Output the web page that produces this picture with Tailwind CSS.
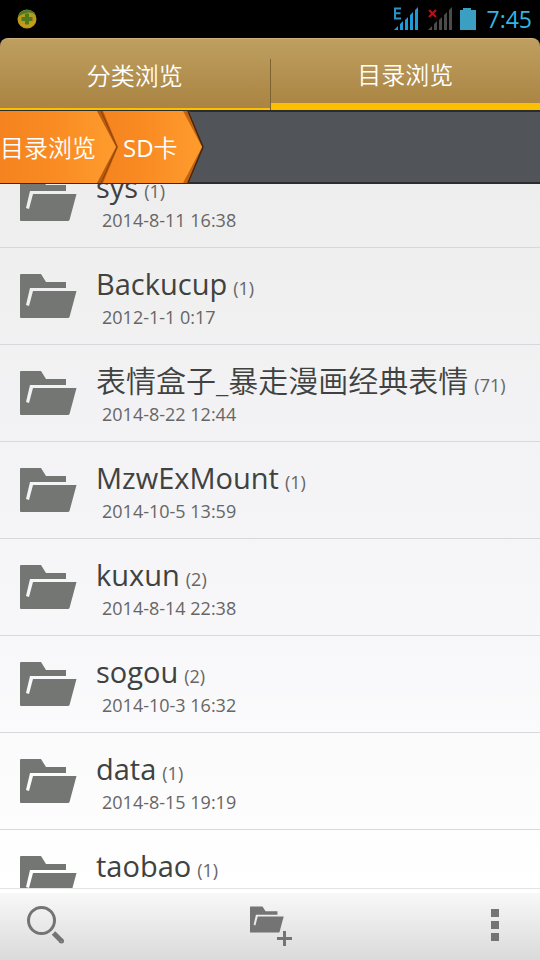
<!DOCTYPE html>
<html lang="zh-CN">
<head>
<meta charset="utf-8">
<meta name="viewport" content="width=device-width, initial-scale=1">
<title>目录浏览</title>
<script src="https://cdn.jsdelivr.net/npm/@tailwindcss/browser@4"></script>
</head>
<body class="bg-black">
<svg class="absolute size-0" aria-hidden="true">
  <symbol id="folder" viewBox="0 0 57 44">
    <path d="M1 0H21L26 8H46V14H10L6 31L9 32L13 17H56.500L49.500 43Q49 44 48 44H1Q0 44 0 43V1Q0 0 1 0Z" fill="currentColor"/>
  </symbol>
  <linearGradient id="orange"><stop offset="0" stop-color="#f5831f"/><stop offset=".45" stop-color="#f98b22"/><stop offset="1" stop-color="#ff9c2e"/></linearGradient>
</svg>
<div class="flex h-screen flex-col overflow-hidden font-['Open_Sans','Noto_Sans_CJK_SC',sans-serif]">
  <header class="flex h-[38px] shrink-0 items-center justify-between bg-black pr-2 pl-[17px]">
    <svg class="size-5" viewBox="0 0 20 20" aria-hidden="true">
      <circle cx="10" cy="10" r="9.500" fill="#b99a1c"/>
      <path d="M1 8A9.500 9.500 0 0 1 18.500 6C14 2 8 3 1 8Z" fill="#477b2c"/>
      <path d="M3 15Q10 20 17 15Q19 12 19 9Q16 16 3 15Z" fill="#d09a17"/>
      <path d="M8 4.500h4V8h3.500v4H12v3.500H8V12H4.500V8H8Z" fill="#4e7a19"/>
    </svg>
    <div class="flex items-center">
      <svg class="h-6 w-[84px]" viewBox="0 0 84 24" aria-hidden="true">
        <g fill="#1c9bd8"><path d="M1 23L5 19V23Z"/><path d="M7 17l3-3v9h-3ZM12 13l3-3v13h-3ZM17 8l3-3v18h-3ZM22 3l3-3v23h-3Z"/></g>
        <path d="M8 1.500H2V11.500H8M2 6.300H7.500" fill="none" stroke="#2b93c4" stroke-width="2"/>
        <g fill="#4b4b4b"><path d="M35 23L39 19V23Z"/><path d="M41 17l3-3v9h-3ZM46 13l3-3v13h-3ZM51 8l3-3v18h-3ZM56 3l3-3v23h-3Z"/></g>
        <path d="M36 3L43 10M43 3L36 10" stroke="#b5121b" stroke-width="2"/>
        <path d="M70 1h8v2h5v20H67V3h3Z" fill="#3a9fc0"/>
      </svg>
      <time class="ml-2.5 text-[23px] leading-9 text-[#33b5e5]">7:45</time>
    </div>
  </header>

  <nav class="flex h-[72px] shrink-0 overflow-hidden rounded-t-lg border-t border-[#cdb07a] bg-linear-to-b from-[#be9f60] to-[#a98341] text-2xl font-[350] text-white" aria-label="浏览方式">
    <a href="#category" class="flex flex-1 items-center justify-center border-b-2 border-[#fcc000] pt-1">分类浏览</a>
    <span class="mt-5 w-px bg-[#7d6232]"></span>
    <a href="#directory" aria-current="page" class="flex flex-1 items-center justify-center border-b-[7px] border-[#fcc000] pt-2">目录浏览</a>
  </nav>

  <nav class="relative z-10 flex h-[74px] shrink-0 border-y-2 border-[#2b2c2e] bg-[#515459] text-2xl font-[350] text-white" aria-label="路径">
    <a href="#root" class="relative z-10 -my-px flex w-[118px] shrink-0 items-center pt-0.5">
      <svg class="absolute inset-0 size-full" viewBox="0 0 118 72" preserveAspectRatio="none" aria-hidden="true">
        <path d="M96 0H103L118 36L103 72H96Z" fill="#b95a0c"/>
        <path d="M101 0L117 36L101 72" fill="none" stroke="#8a4309"/>
        <path d="M0 0H97L116 36L97 72H0Z" fill="url(#orange)"/>
      </svg>
      <span class="relative">目录浏览</span>
    </a>
    <a href="#sd" class="relative -my-px -ml-[22px] flex w-[108px] shrink-0 items-center pt-0.5 pl-[27px]">
      <svg class="absolute inset-0 size-full" viewBox="0 0 108 72" preserveAspectRatio="none" aria-hidden="true">
        <path d="M85 0H93L107.500 36L93 72H85Z" fill="#c5620f"/>
        <path d="M92 0L107 36L92 72" fill="none" stroke="#3a2616" stroke-width="1.500"/>
        <path d="M0 0H87L106 36L87 72H0Z" fill="url(#orange)"/>
      </svg>
      <span class="relative font-normal">SD<span class="font-[350]">卡</span></span>
    </a>
  </nav>

  <main class="min-h-0 flex-1 overflow-hidden bg-linear-to-b from-[#eeeeee] via-[#f5f4f7] to-white">
    <ul class="-mt-[33px] text-[#404240]">
      <li class="border-b border-[#d8d8da]"><a href="#sys" class="flex h-24 pl-5"><svg class="mt-[26px] h-11 w-[57px] shrink-0 text-[#747674]" aria-hidden="true"><use href="#folder"/></svg><span class="ml-[19px] flex flex-col pt-[18px]"><span class="flex items-baseline gap-1.5 text-[29px] leading-9">sys<span class="text-lg leading-6 text-[#666]">(1)</span></span><time class="mt-[3px] pl-1.5 text-lg leading-6 text-[#666]">2014-8-11 16:38</time></span></a></li>
      <li class="border-b border-[#d8d8da]"><a href="#backucup" class="flex h-24 pl-5"><svg class="mt-[26px] h-11 w-[57px] shrink-0 text-[#747674]" aria-hidden="true"><use href="#folder"/></svg><span class="ml-[19px] flex flex-col pt-[18px]"><span class="flex items-baseline gap-1.5 text-[29px] leading-9">Backucup<span class="text-lg leading-6 text-[#666]">(1)</span></span><time class="mt-[3px] pl-1.5 text-lg leading-6 text-[#666]">2012-1-1 0:17</time></span></a></li>
      <li class="border-b border-[#d8d8da]"><a href="#biaoqing" class="flex h-24 pl-5"><svg class="mt-[26px] h-11 w-[57px] shrink-0 text-[#747674]" aria-hidden="true"><use href="#folder"/></svg><span class="ml-[19px] flex flex-col pt-[18px]"><span class="flex items-baseline gap-1.5 text-3xl leading-9 whitespace-nowrap"><span class="font-[350]">表情盒子_暴走漫画经典表情</span><span class="text-lg leading-6 text-[#666]">(71)</span></span><time class="mt-[3px] pl-1.5 text-lg leading-6 text-[#666]">2014-8-22 12:44</time></span></a></li>
      <li class="border-b border-[#d8d8da]"><a href="#mzwexmount" class="flex h-24 pl-5"><svg class="mt-[26px] h-11 w-[57px] shrink-0 text-[#747674]" aria-hidden="true"><use href="#folder"/></svg><span class="ml-[19px] flex flex-col pt-[18px]"><span class="flex items-baseline gap-1.5 text-[29px] leading-9">MzwExMount<span class="text-lg leading-6 text-[#666]">(1)</span></span><time class="mt-[3px] pl-1.5 text-lg leading-6 text-[#666]">2014-10-5 13:59</time></span></a></li>
      <li class="border-b border-[#d8d8da]"><a href="#kuxun" class="flex h-24 pl-5"><svg class="mt-[26px] h-11 w-[57px] shrink-0 text-[#747674]" aria-hidden="true"><use href="#folder"/></svg><span class="ml-[19px] flex flex-col pt-[18px]"><span class="flex items-baseline gap-1.5 text-[29px] leading-9">kuxun<span class="text-lg leading-6 text-[#666]">(2)</span></span><time class="mt-[3px] pl-1.5 text-lg leading-6 text-[#666]">2014-8-14 22:38</time></span></a></li>
      <li class="border-b border-[#d8d8da]"><a href="#sogou" class="flex h-24 pl-5"><svg class="mt-[26px] h-11 w-[57px] shrink-0 text-[#747674]" aria-hidden="true"><use href="#folder"/></svg><span class="ml-[19px] flex flex-col pt-[18px]"><span class="flex items-baseline gap-1.5 text-[29px] leading-9">sogou<span class="text-lg leading-6 text-[#666]">(2)</span></span><time class="mt-[3px] pl-1.5 text-lg leading-6 text-[#666]">2014-10-3 16:32</time></span></a></li>
      <li class="border-b border-[#d8d8da]"><a href="#data" class="flex h-24 pl-5"><svg class="mt-[26px] h-11 w-[57px] shrink-0 text-[#747674]" aria-hidden="true"><use href="#folder"/></svg><span class="ml-[19px] flex flex-col pt-[18px]"><span class="flex items-baseline gap-1.5 text-[29px] leading-9">data<span class="text-lg leading-6 text-[#666]">(1)</span></span><time class="mt-[3px] pl-1.5 text-lg leading-6 text-[#666]">2014-8-15 19:19</time></span></a></li>
      <li><a href="#taobao" class="flex h-24 pl-5"><svg class="mt-[26px] h-11 w-[57px] shrink-0 text-[#747674]" aria-hidden="true"><use href="#folder"/></svg><span class="ml-[19px] flex flex-col pt-[18px]"><span class="flex items-baseline gap-1.5 text-[29px] leading-9">taobao<span class="text-lg leading-6 text-[#666]">(1)</span></span></span></a></li>
    </ul>
  </main>

  <footer class="shrink-0 border-t border-[#e4e4e4] bg-white pt-1">
    <div class="flex h-[67px] items-center justify-between bg-linear-to-b from-[#f8f8f8] to-[#d9dad9] px-[25px] pb-1 text-[#737473]">
      <button type="button" aria-label="搜索"><svg class="size-10" viewBox="0 0 40 40" fill="none" stroke="currentColor" aria-hidden="true"><circle cx="16.500" cy="15.500" r="13" stroke-width="3"/><path d="M28.500 28L36.500 36" stroke-width="5"/><circle cx="36.500" cy="36" r="1" stroke-width="3"/></svg></button>
      <button type="button" aria-label="新建文件夹"><svg class="h-[42px] w-11" viewBox="0 0 44 42" aria-hidden="true"><use href="#folder" width="34" height="27" x="2" y="2"/><path d="M29 33H35V27H38V33H44V36H38V42H35V36H29Z" fill="currentColor"/></svg></button>
      <button type="button" aria-label="更多" class="flex w-10 flex-col items-center gap-1"><span class="size-2 bg-current"></span><span class="size-2 bg-current"></span><span class="size-2 bg-current"></span></button>
    </div>
  </footer>
</div>
</body>
</html>
